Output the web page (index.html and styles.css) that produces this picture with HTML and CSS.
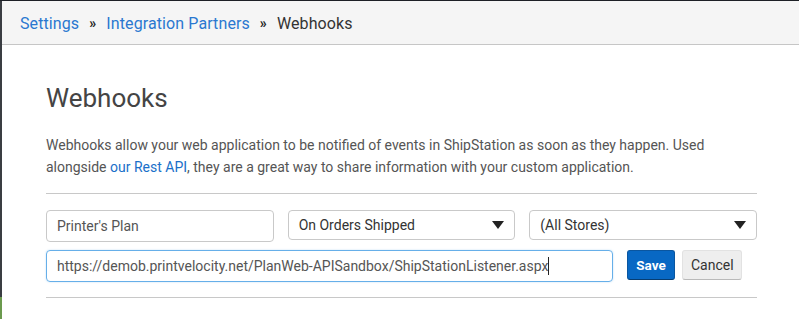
FILE: index.html
```html
<!DOCTYPE html>
<html lang="en">
<head>
    <meta charset="UTF-8">
    <meta name="viewport" content="width=device-width, initial-scale=1.0">
    <link rel="stylesheet" href="styles.css">
    <title>Webhooks</title>
</head>
<body>
    <section id="page" class="frame">

        <div class="crumbs">
            <a href="#" class="crumb-link">Settings</a>
            <span class="crumb-sep">&raquo;</span>
            <a href="#" class="crumb-link">Integration Partners</a>
            <span class="crumb-sep">&raquo;</span>
            <span class="crumb-current">Webhooks</span>
        </div>

        <div class="content">
            <h1 class="title">Webhooks</h1>
            <p class="intro">
                <span class="line">Webhooks allow your web application to be notified of events in ShipStation as soon as they happen. Used</span>
                <span class="line">alongside <a href="#" class="link">our Rest API</a>, they are a great way to share information with your custom application.</span>
            </p>

            <hr class="rule">

            <form class="hook-form">
                <div class="row-top">
                    <input class="inputs" type="text" name="name" value="Printer's Plan">
                    <div class="picker">
                        <span>On Orders Shipped</span>
                        <svg class="arrow" width="12" height="8" viewBox="0 0 12 8"><path d="M0 0 H12 L6 8 Z" fill="#222"/></svg>
                    </div>
                    <div class="picker">
                        <span>(All Stores)</span>
                        <svg class="arrow" width="12" height="8" viewBox="0 0 12 8"><path d="M0 0 H12 L6 8 Z" fill="#222"/></svg>
                    </div>
                </div>
                <div class="row-bottom">
                    <div class="inputs url">https://demob.printvelocity.net/PlanWeb-APISandbox/ShipStationListener.aspx<span class="caret"></span></div>
                    <button type="submit" class="btn save">Save</button>
                    <button type="button" class="btn cancel">Cancel</button>
                </div>
            </form>

            <hr class="rule">
        </div>

    </section>
</body>
</html>
```

FILE: styles.css
```css
* {
    box-sizing: border-box;
    font-family: "Roboto", "Liberation Sans", sans-serif;
}

html, body {
    margin: 0;
    padding: 0;
    height: 100%;
    background-color: #fff;
}

body {
    border-top: 1px solid #1d2026;
    overflow: hidden;
}

.frame {
    min-height: 100%;
    border-left: 2px solid transparent;
    border-image: linear-gradient(to bottom, #3a3d42 0, #3a3d42 295px, #6b9a4e 295px, #6b9a4e 100%) 1;
}

/*

    BREADCRUMB

*/

.crumbs {
    height: 44px;
    padding-left: 18px;
    padding-top: 1px;

    display: flex;
    align-items: center;
    gap: 10px;

    font-size: 16px;
    letter-spacing: 0.1px;

    background-color: #f5f5f5;
    border-bottom: 1px solid #c6c6c6;
}

.crumb-link {
    color: #2a78d0;
    text-decoration: none;
}

.crumb-sep {
    color: #222;
    font-weight: bold;
    font-size: 14px;
}

.crumb-current {
    color: #333;
}

/*

    CONTENT

*/

.content {
    width: 755px;
    padding-left: 44px;
    padding-top: 38px;
}

.title {
    margin: 0;

    font-size: 26px;
    font-weight: 400;
    line-height: 30px;
    color: #444;
}

.intro {
    margin: 21px 0 15px 0;

    font-size: 14px;
    line-height: 22px;
    color: #555;
}

.line {
    display: block;
    white-space: nowrap;
}

.link {
    color: #1a6fc9;
    text-decoration: none;
}

.rule {
    margin: 0;
    border: none;
    border-top: 1px solid #c8c8c8;
}

.hook-form {
    padding: 16px 0 15px 0;
}

.row-top {
    display: grid;
    grid-template-columns: 1fr 1fr 1fr;
    gap: 14px;
    align-items: start;
}

.row-bottom {
    margin-top: 8px;

    display: flex;
    align-items: flex-start;
}

.inputs {
    height: 32px;
    padding: 0 10px;

    font-size: 14px;
    color: #555;

    border: 1px solid #c9c9c9;
    border-radius: 4px;
    outline: none;
}

.url {
    width: 567px;
    margin-right: 14px;

    display: flex;
    align-items: center;

    border-color: #66afe9;
    box-shadow: 0 0 2px rgba(102, 175, 233, 0.4);
}

.caret {
    width: 1px;
    height: 18px;
    background-color: #222;
}

.picker {
    height: 30px;
    padding: 0 10px;

    display: flex;
    justify-content: space-between;
    align-items: center;

    font-size: 14px;
    color: #333;

    border: 1px solid #c9c9c9;
    border-radius: 4px;
}

.btn {
    height: 30px;
    padding: 0 8px;

    font-size: 14px;

    border-radius: 3px;
}

.save {
    width: 48px;
    margin-right: 7px;

    font-weight: bold;
    font-size: 13.5px;
    color: white;

    background-color: #0868c4;
    border: 1px solid #0a56a0;
    border-bottom-color: #063d73;
}

.cancel {
    width: 60px;

    color: #333;

    background-color: #eeeeee;
    border: 1px solid #e2e2e2;
    border-bottom-color: #b9b9b9;
}
```
